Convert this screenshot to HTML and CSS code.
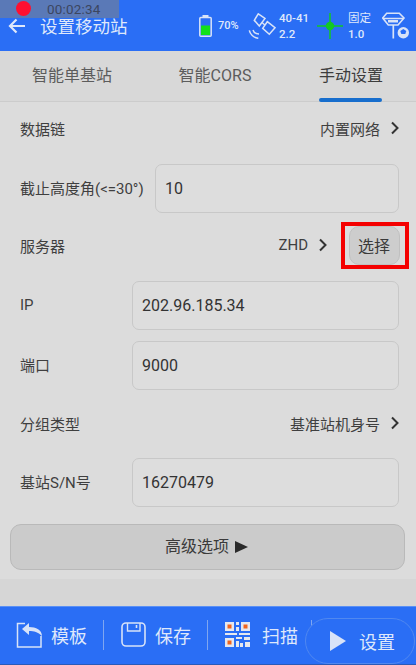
FILE: index.html
```html
<!DOCTYPE html>
<html lang="zh">
<head>
<meta charset="utf-8">
<title>设置移动站</title>
<link rel="stylesheet" href="styles.css">
</head>
<body>
<div class="screen">
  <header class="topbar">
    <div class="title-group">
      <svg class="back" width="20" height="18" viewBox="0 0 20 18"><path d="M18 9H3M9.500 2.500 3 9l6.500 6.500" fill="none" stroke="#dfe8fb" stroke-width="2.200"/></svg>
      <span class="title">设置移动站</span>
    </div>
    <div class="status">
      <svg class="battery" width="13" height="22" viewBox="0 0 13 22"><rect x="3.500" y="0" width="6" height="2.500" fill="#d8e3f8"/><rect x=".8" y="2.500" width="11.400" height="18.700" rx="1" fill="none" stroke="#d8e3f8" stroke-width="1.500"/><rect x="2" y="10.500" width="9" height="9.500" fill="#12e01a"/></svg>
      <span class="pct">70%</span>
      <svg class="sat" width="28" height="26" viewBox="0 0 28 26"><g fill="none" stroke="#d8e3f8" stroke-width="1.500"><path d="M10.300.8 17 5.500 11.300 13 6.300 7.300Z"/><path d="M19.300 8.700 27 14.700 21.300 21.300 14.700 15.300Z"/><path d="M14 9.500 16.800 12"/><path d="M1.300 17.300C2 21 5.500 24.800 10.300 25.300M5 17c.6 2 3 4 6 4"/></g></svg>
      <div class="stack stack-sat"><span>40-41</span><span>2.2</span></div>
      <svg class="fix" width="26" height="26" viewBox="0 0 26 26"><path d="M0 13h26M13 0v26" stroke="#12c824" stroke-width="1.500"/><circle cx="13" cy="13" r="4.200" fill="#12c824"/></svg>
      <div class="stack stack-fix"><span>固定</span><span>1.0</span></div>
      <svg class="rover" width="28" height="28" viewBox="0 0 28 28"><path d="M.7 6 4.700 1.300H17.300L22 6l-6 7H6.300Z" fill="none" stroke="#d8e3f8" stroke-width="1.600"/><path d="M1 6.500h20" stroke="#d8e3f8" stroke-width="1.500"/><rect x="6" y="8" width="10" height="2.500" fill="#d8e3f8"/><path d="M11.300 13v13.500" stroke="#d8e3f8" stroke-width="1.700"/><circle cx="21.300" cy="20.700" r="5.700" fill="#d8e3f8"/><path d="M21.300 17l3 2-1 3h-4l-1-3Z" fill="#2a6ef5"/></svg>
    </div>
  </header>

  <nav class="tabs">
    <div class="tab">智能单基站</div>
    <div class="tab">智能CORS</div>
    <div class="tab tab-active">手动设置</div>
  </nav>

  <main class="form">
    <div class="row row-link row-first">
      <span class="label">数据链</span>
      <span class="value">内置网络<svg class="chev" width="10" height="14" viewBox="0 0 10 14"><path d="M2 1.500 7.500 7 2 12.500" fill="none" stroke="#333" stroke-width="2"/></svg></span>
    </div>
    <div class="row row-field field-wide">
      <span class="label">截止高度角(&lt;=30°)</span>
      <div class="input">10</div>
    </div>
    <div class="row row-link row-server">
      <span class="label">服务器</span>
      <span class="value">ZHD<svg class="chev" width="10" height="14" viewBox="0 0 10 14"><path d="M2 1.500 7.500 7 2 12.500" fill="none" stroke="#333" stroke-width="2"/></svg></span>
      <div class="pick"><button class="pick-btn">选择</button></div>
    </div>
    <div class="row row-field row-ip">
      <span class="label">IP</span>
      <div class="input">202.96.185.34</div>
    </div>
    <div class="row row-field row-port">
      <span class="label">端口</span>
      <div class="input">9000</div>
    </div>
    <div class="row row-link row-group">
      <span class="label">分组类型</span>
      <span class="value">基准站机身号<svg class="chev" width="10" height="14" viewBox="0 0 10 14"><path d="M2 1.500 7.500 7 2 12.500" fill="none" stroke="#333" stroke-width="2"/></svg></span>
    </div>
    <div class="row row-field row-sn">
      <span class="label">基站S/N号</span>
      <div class="input">16270479</div>
    </div>
    <button class="advanced">高级选项 <span class="tri"></span></button>
  </main>
  <div class="band"></div>

  <footer class="bottombar">
    <div class="action action-tpl">
      <svg width="27" height="26" viewBox="0 0 27 26"><path d="M9 1.500H1.500V25H25V14" fill="none" stroke="#d8e3f8" stroke-width="1.500"/><path d="M13 1 6 7l7 6V9c5 0 9 1 13 5 0-6-6-9-13-9Z" fill="#d8e3f8"/></svg>
      <span>模板</span>
    </div>
    <i class="sep"></i>
    <div class="action action-save">
      <svg width="25" height="25" viewBox="0 0 25 25"><rect x="1" y="1" width="23" height="23" rx="4" fill="none" stroke="#d8e3f8" stroke-width="1.600"/><path d="M6.500 1v8H19V1" fill="none" stroke="#d8e3f8" stroke-width="1.400"/><path d="M15.500 3v3" stroke="#d8e3f8" stroke-width="1.600"/></svg>
      <span>保存</span>
    </div>
    <i class="sep"></i>
    <div class="action action-scan">
      <svg width="25" height="25" viewBox="0 0 25 25"><g fill="#e6e8ee"><rect width="9" height="9"/><rect x="16" width="9" height="9"/><rect y="16" width="9" height="9"/><rect x="0" y="11" width="12" height="2"/><rect x="14" y="11" width="11" height="2"/><rect x="11" y="0" width="3" height="3"/><rect x="11" y="5" width="3" height="4"/><rect x="11" y="15" width="6" height="2"/><rect x="19" y="15" width="6" height="3"/><rect x="11" y="19" width="3" height="6"/><rect x="15" y="21" width="3" height="4"/><rect x="20" y="20" width="5" height="5"/></g><g fill="#f0641e"><rect x="2.500" y="2.500" width="4" height="4"/><rect x="18.500" y="2.500" width="4" height="4"/><rect x="2.500" y="18.500" width="4" height="4"/></g></svg>
      <span>扫描</span>
    </div>
    <i class="sep"></i>
    <div class="set-btn">
      <span class="play"></span><span>设置</span>
    </div>
  </footer>

  <div class="rec"><span class="rec-dot"></span><span class="rec-time">00:02:34</span></div>
  <div class="redbox"></div>
</div>
</body>
</html>
```

FILE: styles.css
```css
* { box-sizing: border-box; }
html, body { margin: 0; padding: 0; }
body { background: #dcdcdc; font-family: Roboto, "Noto Sans CJK SC", sans-serif; color: #3a3a3a; }
.screen { position: relative; width: 416px; height: 665px; overflow: hidden; display: flex; flex-direction: column; background: #dcdcdc; }

.topbar { height: 51px; flex: none; background: #2a6ef5; color: #dfe8fb; display: flex; align-items: center; justify-content: space-between; padding: 0 6px 0 7px; }
.title-group { display: flex; align-items: center; gap: 13px; }
.back { display: block; }
.title { font-size: 17.500px; }
.status { display: flex; align-items: center; }
.battery { margin-right: 6px; }
.pct { font-size: 11px; font-weight: 500; width: 30px; }
.sat { margin-right: 3px; }
.stack { display: flex; flex-direction: column; gap: 2px; font-size: 11.500px; font-weight: 500; line-height: 14px; }
.stack-sat { width: 38px; }
.stack-fix { width: 34px; }
.fix { margin-right: 5px; }
.stack-fix span:first-child { font-weight: 400; }

.tabs { height: 51px; flex: none; display: grid; grid-template-columns: 144px 142px 130px; background: #d8d8d8; border-bottom: 1px solid #cccccc; font-size: 16px; color: #5c5c5c; }
.tab { display: flex; align-items: center; justify-content: center; padding-bottom: 5px; position: relative; }
.tab-active { color: #3c3c3c; }
.tab-active::after { content: ""; position: absolute; left: 33px; width: 63px; bottom: -1px; height: 4px; border-radius: 2px; background: #176ecd; }

.form { flex: none; height: 477px; padding: 0 10px 0 20px; display: flex; flex-direction: column; }
.row { display: flex; align-items: center; justify-content: space-between; font-size: 15px; color: #3f3f3f; }
.row-link { height: 20px; }
.row-first { margin-top: 16px; }
.value { display: flex; align-items: center; gap: 10px; padding-right: 6px; font-size: 15px; }
.chev { display: block; }
.row-field { height: 49px; }
.row-field .label { padding-bottom: 2px; }
.field-wide { margin-top: 26px; margin-right: 7px; }
.row-server { margin-top: 22px; justify-content: flex-start; }
.row-server .value { margin-left: auto; }
.pick { position: relative; width: 68px; height: 20px; margin-left: 6px; margin-right: -2px; display: flex; align-items: center; justify-content: center; }
.pick-btn { width: 51px; height: 39px; flex: none; border: 1px solid #c0c0c0; border-radius: 10px; background: #cdcdcd; font: inherit; font-size: 16px; color: #3a3a3a; padding: 0; }
.row-ip { margin-top: 26px; margin-right: 7px; }
.row-port { margin-top: 11px; margin-right: 7px; }
.row-group { margin-top: 23px; }
.row-sn { margin-top: 25px; margin-right: 7px; }
.input { width: 267px; height: 100%; background: #dddddd; border: 1px solid #c8c8c8; border-radius: 7px; display: flex; align-items: center; padding-left: 9px; font-size: 16px; color: #333; }
.field-wide .input { width: 244px; }
.advanced { margin: 17px 1px 0 -10px; height: 46px; flex: none; border: 1px solid #b9b9b9; border-radius: 11px; background: #cbcbcb; font: inherit; font-size: 16px; color: #3a3a3a; display: flex; align-items: center; justify-content: center; gap: 6px; padding: 0 2px 4px 0; }
.tri { width: 0; height: 0; margin-top: 4px; border-left: 13px solid #2a2a2a; border-top: 6.500px solid transparent; border-bottom: 6.500px solid transparent; }
.band { flex: 1; background: #d6d6d6; }

.bottombar { position: relative; height: 59px; flex: none; background: #2a6ef5; border-top: 1px solid #5a90f5; border-bottom: 1px solid #2a5ab8; color: #dfe8fb; display: flex; align-items: center; font-size: 18px; padding-bottom: 2px; }
.action { display: flex; align-items: center; flex: none; }
.action svg { display: block; }
.action-tpl { margin-left: 16px; gap: 8px; }
.action-save { margin-left: 17px; gap: 9px; }
.action-scan { margin-left: 17px; gap: 12px; }
.sep { width: 1px; height: 30px; flex: none; background: #7fa6f0; margin-left: 16px; }
.action-scan + .sep { margin-left: 13px; }
.set-btn { position: absolute; left: 305px; top: 11px; width: 110px; height: 46px; border: 1px solid #5088f0; border-radius: 23px; background: #2a6ef5; display: flex; align-items: center; gap: 13px; padding-left: 24px; font-size: 18px; }
.play { width: 0; height: 0; border-left: 16px solid #d8e3f8; border-top: 10px solid transparent; border-bottom: 10px solid transparent; }

.rec { position: absolute; left: 0; top: 0; width: 119px; height: 18px; background: rgba(120,128,145,0.62); }
.rec-dot { position: absolute; left: 16px; top: 1px; width: 15px; height: 15px; border-radius: 50%; background: #ff1030; }
.rec-time { position: absolute; left: 47px; top: 1px; font-size: 13.500px; line-height: 17px; color: #3c4660; letter-spacing: .2px; }
.redbox { position: absolute; left: 341px; top: 222px; width: 68px; height: 47px; border: 4px solid #f40000; pointer-events: none; }
```
